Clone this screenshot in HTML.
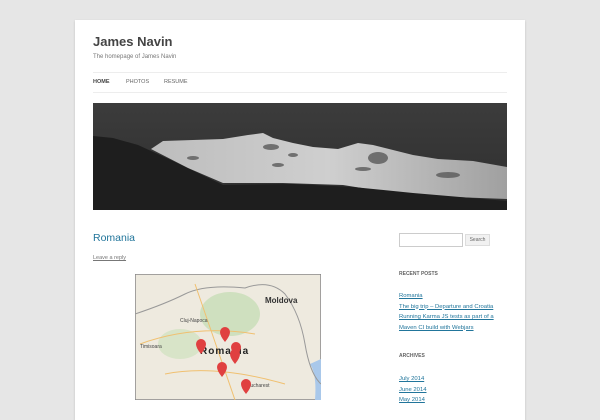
<!DOCTYPE html>
<html><head><meta charset="utf-8">
<style>
*{margin:0;padding:0;box-sizing:border-box}
body{width:600px;height:400px;overflow:hidden;background:#e6e6e6;font-family:"Liberation Sans",sans-serif;color:#444}
.page{position:absolute;left:75px;top:20px;width:450px;height:400px;background:#fff;box-shadow:0 1px 2px rgba(100,100,100,.3)}
.t{position:absolute;white-space:nowrap}
a{color:#21759b}
</style></head><body>
<div class="page"></div>
<div class="t" style="left:93px;top:34px;font-size:13px;font-weight:bold;color:#444">James Navin</div>
<div class="t" style="left:93px;top:54px;font-size:6px;color:#777">The homepage of James Navin</div>
<div style="position:absolute;left:93px;top:72px;width:414px;border-top:1px solid #ededed"></div>
<div class="t" style="left:93px;top:79px;font-size:5.5px;font-weight:bold;color:#444">HOME</div>
<div class="t" style="left:126px;top:79px;font-size:5.5px;color:#666">PHOTOS</div>
<div class="t" style="left:164px;top:79px;font-size:5.5px;color:#666">RESUME</div>
<div style="position:absolute;left:93px;top:92px;width:414px;border-top:1px solid #ededed"></div>
<svg style="position:absolute;left:93px;top:103px" width="414" height="107" viewBox="0 0 414 107">
<defs><linearGradient id="s" x1="0" y1="0" x2="0" y2="1"><stop offset="0" stop-color="#3c3c3c"/><stop offset="1" stop-color="#2e2e2e"/></linearGradient>
<linearGradient id="w" x1="0" y1="0" x2="1" y2="0"><stop offset="0" stop-color="#bdbdbd"/><stop offset=".5" stop-color="#cfcfcf"/><stop offset="1" stop-color="#a0a0a0"/></linearGradient></defs>
<rect width="414" height="107" fill="url(#s)"/>
<polygon points="58,46 70,38 100,37 130,36 155,32 170,30 180,35 200,40 220,44 245,46 265,40 280,42 300,47 320,52 345,56 380,58 414,64 414,96 360,94 300,90 250,82 190,80 130,80 95,65" fill="url(#w)"/>
<g fill="#5a5a5a" opacity=".8"><ellipse cx="178" cy="44" rx="8" ry="3"/><ellipse cx="285" cy="55" rx="10" ry="6"/><ellipse cx="185" cy="62" rx="6" ry="2"/><ellipse cx="355" cy="72" rx="12" ry="3"/><ellipse cx="100" cy="55" rx="6" ry="2"/><ellipse cx="270" cy="66" rx="8" ry="2"/><ellipse cx="200" cy="52" rx="5" ry="2"/></g>
<polygon points="0,33 20,35 45,42 80,58 130,82 200,81 260,84 320,90 414,98 414,107 0,107" fill="#1e1e1e"/>
</svg>
<div class="t" style="left:93px;top:232px;font-size:10.5px;color:#21759b">Romania</div>
<div class="t" style="left:93px;top:255px;font-size:5.5px;color:#777;text-decoration:underline">Leave a reply</div>
<svg style="position:absolute;left:135px;top:274px" width="186" height="126" viewBox="0 0 186 126">
<rect width="186" height="126" fill="#eeeadf" stroke="#888" stroke-width="1.5"/>
<ellipse cx="95" cy="40" rx="30" ry="22" fill="#cfe0bf"/>
<ellipse cx="45" cy="70" rx="22" ry="15" fill="#d8e4c8"/>
<path d="M175,90 Q182,100 180,126 L186,126 L186,85Z" fill="#a9c8ea"/>
<path d="M0,40 Q30,30 50,20 Q70,10 110,14 Q135,5 150,20 Q165,40 170,70 Q175,100 186,110" fill="none" stroke="#999" stroke-width="1"/>
<path d="M5,70 Q60,50 120,60 M30,100 Q80,90 150,110 M60,10 L100,126" fill="none" stroke="#f0c070" stroke-width="1"/>
<text x="130" y="29" font-size="8" font-weight="bold" fill="#333" font-family="Liberation Sans">Moldova</text>
<text x="65" y="80" font-size="10" font-weight="bold" fill="#222" font-family="Liberation Sans" letter-spacing="1">Romania</text>
<text x="45" y="48" font-size="5" fill="#444" font-family="Liberation Sans">Cluj-Napoca</text>
<text x="112" y="113" font-size="5" fill="#444" font-family="Liberation Sans">Bucharest</text>
<text x="5" y="74" font-size="5" fill="#444" font-family="Liberation Sans">Timisoara</text>
<g fill="#e04040"><path d="M85,58 a5,5 0 1,1 10,0 q0,4 -5,10 q-5,-6 -5,-10z"/><path d="M61,70 a5,5 0 1,1 10,0 q0,4 -5,10 q-5,-6 -5,-10z"/><path d="M96,73 a5,5 0 1,1 10,0 q0,4 -5,10 q-5,-6 -5,-10z"/><path d="M95,80 a5,5 0 1,1 10,0 q0,4 -5,10 q-5,-6 -5,-10z"/><path d="M82,93 a5,5 0 1,1 10,0 q0,4 -5,10 q-5,-6 -5,-10z"/><path d="M106,110 a5,5 0 1,1 10,0 q0,4 -5,10 q-5,-6 -5,-10z"/></g>
</svg>
<div style="position:absolute;left:399px;top:233px;width:64px;height:14px;border:1px solid #ccc"></div>
<div class="t" style="left:465px;top:234px;width:25px;height:12px;border:1px solid #ddd;background:#f1f1f1;font-size:5px;color:#666;text-align:center;line-height:11px">Search</div>
<div class="t" style="left:399px;top:271px;font-size:5px;font-weight:bold;color:#636363">RECENT POSTS</div>
<div class="t" style="left:399px;top:291px;font-size:5.9px;line-height:10.5px;color:#21759b;text-decoration:underline">Romania<br>The big trip – Departure and Croatia<br>Running Karma JS tests as part of a<br>Maven CI build with Webjars</div>
<div class="t" style="left:399px;top:353px;font-size:5px;font-weight:bold;color:#636363">ARCHIVES</div>
<div class="t" style="left:399px;top:374px;font-size:5.9px;line-height:10.5px;color:#21759b;text-decoration:underline">July 2014<br>June 2014<br>May 2014</div>
</body></html>
